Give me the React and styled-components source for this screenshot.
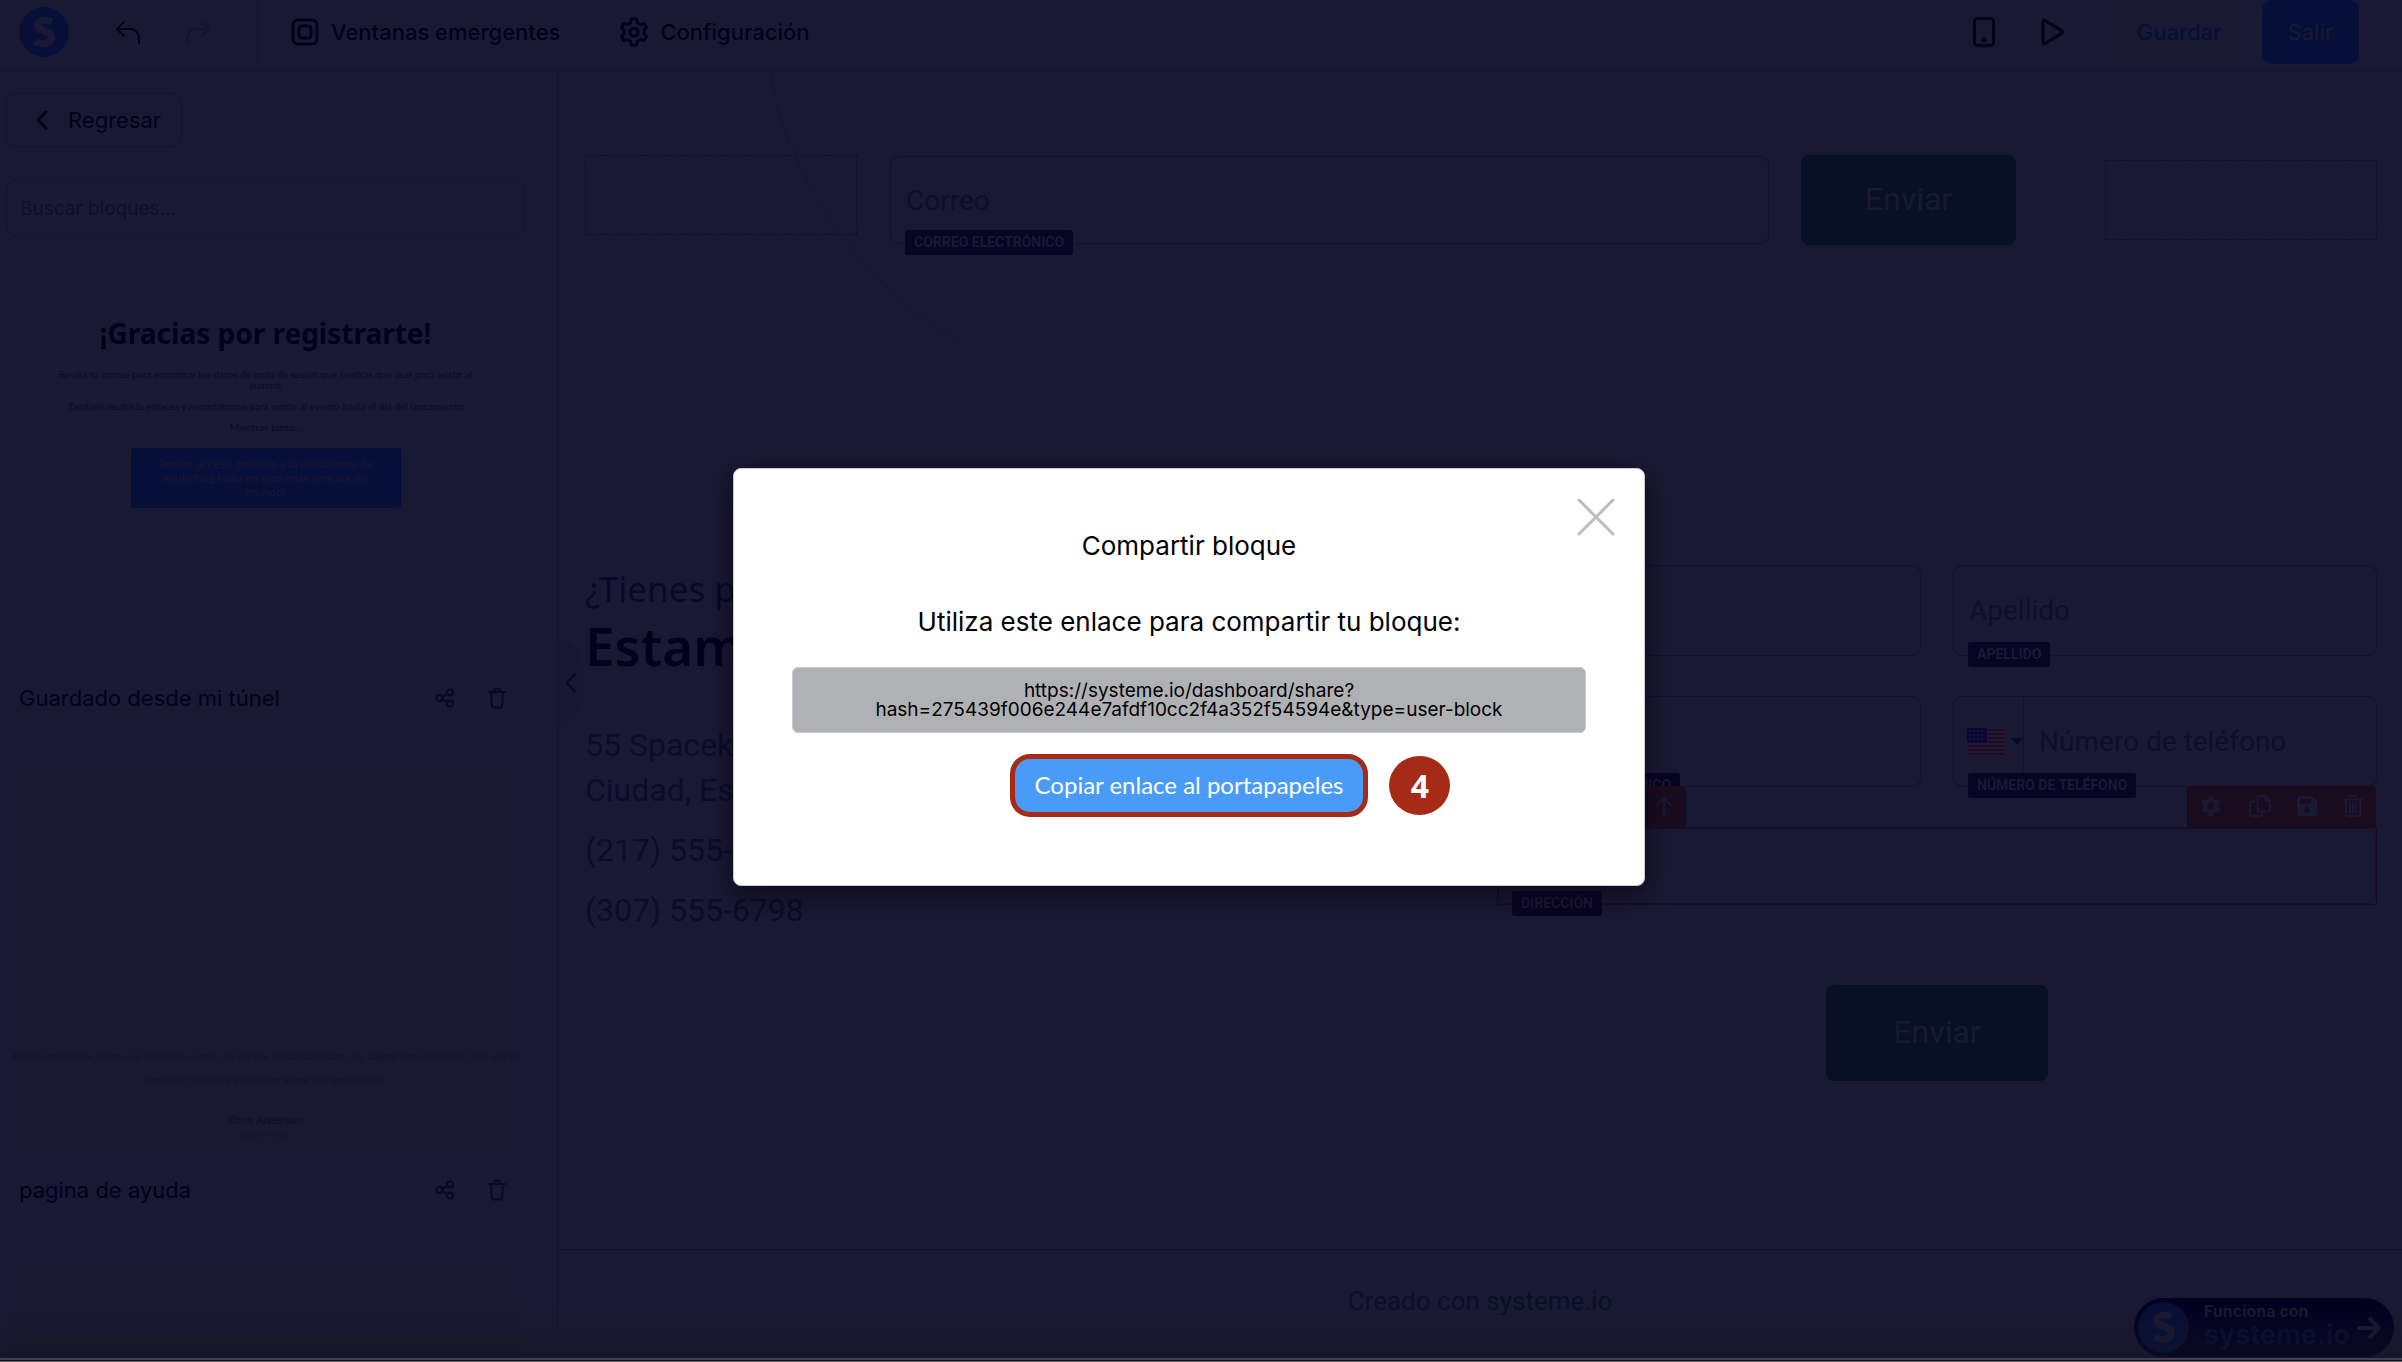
import React, { useState } from "react";
import styled, { createGlobalStyle } from "styled-components";

const colors = {
  bg: "#1a1933",
  canvas: "#191832",
  line: "#151430",
  ink: "#02001f",
  inkSoft: "#0a0828",
  navy: "#020020",
  blue: "#060f38",
  green: "#081024",
  muted: "#0f0d2a",
  tag: "#080424",
  red: "#190c1f",
  accent: "#a62b17",
};

const shareHash = "275439f006e244e7afdf10cc2f4a352f54594e";

const App = () => {
  const [search, setSearch] = useState("");
  return (
    <Frame>
      <GlobalStyle />
      <TopBar />
      <Body>
        <Sidebar>
          <BackButton type="button">
            <svg width="12" height="20" viewBox="0 0 12 20">
              <path d="M10 2 2 10l8 8" />
            </svg>
            Regresar
          </BackButton>
          <SearchInput
            aria-label="Buscar bloques"
            placeholder="Buscar bloques..."
            value={search}
            onChange={(e) => setSearch(e.target.value)}
          />
          <BlockList>
            <BlockCard name="Guardado desde mi túnel">
              <ThanksPreview />
            </BlockCard>
            <BlockCard name="pagina de ayuda" shaded>
              <QuotePreview />
            </BlockCard>
            <Preview $shaded />
          </BlockList>
        </Sidebar>
        <Canvas />
      </Body>
      <BottomShade />
      <WindowEdge />
      <ShareModal />
    </Frame>
  );
};

const TopBar = () => (
  <Header>
    <LogoLink href="#" aria-label="systeme">
      <LogoMark size={50} />
    </LogoLink>
    <History>
      <IconButton type="button" aria-label="Deshacer">
        <svg width="26" height="24" viewBox="0 0 26 24">
          <path d="M9 2 2 9l7 7M2 9h13a9 9 0 0 1 9 9v5" />
        </svg>
      </IconButton>
      <IconButton type="button" aria-label="Rehacer" $faint>
        <svg width="26" height="24" viewBox="0 0 26 24">
          <path d="m17 2 7 7-7 7M24 9H11a9 9 0 0 0-9 9v5" />
        </svg>
      </IconButton>
    </History>
    <NavButton type="button">
      <svg width="28" height="28" viewBox="0 0 28 28">
        <rect x="2" y="2" width="24" height="24" rx="5" />
        <rect x="8" y="8" width="12" height="12" rx="3" />
      </svg>
      Ventanas emergentes
    </NavButton>
    <NavButton type="button">
      <svg width="28" height="30" viewBox="0 0 28 30">
        <path d="M11.500 2h5l1.200 4 2.600 1.500 4-1 2.200 4.300-2.700 2.700v3l2.700 2.700-2.200 4.300-4-1-2.600 1.500-1.200 4h-5l-1.200-4-2.600-1.500-4 1-2.200-4.300 2.700-2.700v-3l-2.700-2.700 2.200-4.300 4 1L10.300 6z" />
        <circle cx="14" cy="15" r="4" />
      </svg>
      Configuración
    </NavButton>
    <Actions>
      <IconButton type="button" aria-label="Vista móvil">
        <svg width="22" height="30" viewBox="0 0 22 30">
          <rect x="1.500" y="1.500" width="19" height="27" rx="3" />
          <circle cx="11" cy="22.500" r="1" />
        </svg>
      </IconButton>
      <IconButton type="button" aria-label="Vista previa">
        <svg width="24" height="28" viewBox="0 0 24 28">
          <path d="M2 3.200v21.600c0 1.300 1 1.500 1.800.900l17.400-10.600c.9-.6.9-1.600 0-2.200L3.800 2.300C3 1.700 2 1.900 2 3.200z" />
        </svg>
      </IconButton>
      <SaveGroup>
        <TopButton type="button">Guardar</TopButton>
        <TopButton type="button" $primary>
          Salir
        </TopButton>
      </SaveGroup>
    </Actions>
  </Header>
);

const LogoMark = ({ size }) => (
  <svg width={size} height={size} viewBox="0 0 50 50" aria-hidden="true">
    <circle cx="25" cy="25" r="25" fill={colors.blue} />
    <path
      d="M33 14.500c-2.500-1.200-5-1.600-7.500-1.600-4 0-7 1.800-7 5.300 0 6.800 14 4.600 14 12.300 0 4.200-3.800 6-8 6-3.500 0-6-.6-8.500-1.900"
      fill="none"
      style={{ strokeWidth: 7, strokeLinecap: "butt" }}
      stroke={colors.bg}
    />
  </svg>
);

const BlockCard = ({ name, shaded, children }) => (
  <Card>
    <Preview $shaded={shaded}>{children}</Preview>
    <CardFooter>
      <CardName>{name}</CardName>
      <CardButton type="button" aria-label={`Compartir ${name}`}>
        <svg width="20" height="20" viewBox="0 0 20 20">
          <circle cx="4.500" cy="10" r="3" />
          <circle cx="15" cy="4.500" r="3" />
          <circle cx="15" cy="15.500" r="3" />
          <path d="m7.200 8.600 5.200-2.700M7.200 11.400l5.200 2.700" />
        </svg>
      </CardButton>
      <CardButton type="button" aria-label={`Eliminar ${name}`}>
        <svg width="20" height="22" viewBox="0 0 20 22">
          <path d="M2 5h16M4 5l.8 13.500c.1 1.300.8 2 2 2h6.400c1.200 0 1.900-.7 2-2L16 5M6.500 5c0-2.500 1-3.500 3.500-3.500s3.500 1 3.500 3.500" />
        </svg>
      </CardButton>
    </CardFooter>
  </Card>
);

const ThanksPreview = () => (
  <Thanks>
    <h2>¡Gracias por registrarte!</h2>
    <p>
      Revisa tu correo para encontrar los datos de incio de sesión que tendrás
      que usar para asistir al
      <br />
      summit
    </p>
    <p>
      También recibirás enlaces y recordatorios para unirte al evento hasta el
      día del lanzamiento
    </p>
    <p>Mientras tanto...</p>
    <ThanksButton>
      Recibe acceso gratuito a la plataforma de marketing todo en uno ¡más
      sencilla del mundo!
    </ThanksButton>
  </Thanks>
);

const QuotePreview = () => (
  <Quote>
    <p>
      Aenean sollicitudin, lorem quis bibendum auctor, nisi elit ade consequat
      ipsum, nec sagittis sem nibh id elit. Duis sed sit
      <br />
      amet nibh vulputate a sit nullam labore sed amet mauris.
    </p>
    <strong>Chris Anderson</strong>
    <small>CEO de Incorp</small>
  </Quote>
);

const Field = ({ label, placeholder, children }) => (
  <FieldBox>
    {children}
    <FieldInput aria-label={label} placeholder={placeholder} />
    <Tag>{label}</Tag>
  </FieldBox>
);

const Canvas = () => (
  <Main>
    <Collapse type="button" aria-label="Ocultar panel">
      <svg width="12" height="20" viewBox="0 0 12 20">
        <path d="M10 1 2 10l8 9" />
      </svg>
    </Collapse>
    <Hero>
      <Curve width="190" height="272" viewBox="0 0 190 272">
        <path d="M1 0C18 106 90 210 189 271" />
      </Curve>
      <DropZone />
      <HeroField>
        <Field label="Correo electrónico" placeholder="Correo" />
      </HeroField>
      <SubmitButton type="button">Enviar</SubmitButton>
      <DropZone $last />
    </Hero>
    <Contact>
      <div>
        <Question>¿Tienes preguntas?</Question>
        <Title>Estamos aquí</Title>
        <Address>
          <p>
            55 Spacek Street
            <br />
            Ciudad, Estado
          </p>
          <p>(217) 555-0113</p>
          <p>(307) 555-6798</p>
        </Address>
      </div>
      <Form onSubmit={(e) => e.preventDefault()}>
        <Field label="Nombre" placeholder="Nombre" />
        <Field label="Apellido" placeholder="Apellido" />
        <Field label="Correo electrónico" placeholder="Correo" />
        <Field label="Número de teléfono" placeholder="Número de teléfono">
          <CountryButton type="button" aria-label="País">
            <Flag />
            <svg width="12" height="7" viewBox="0 0 12 7">
              <path d="M0 0h12L6 7z" fill={colors.inkSoft} />
            </svg>
          </CountryButton>
        </Field>
        <Selected>
          <MoveTools>
            <ToolButton type="button" aria-label="Subir">
              <svg width="18" height="20" viewBox="0 0 18 20">
                <path d="M9 19V2M2 9l7-7 7 7" />
              </svg>
            </ToolButton>
          </MoveTools>
          <EditTools />
          <FieldInput aria-label="Dirección" $outlined />
          <Tag>Dirección</Tag>
        </Selected>
        <FormSubmit type="submit">Enviar</FormSubmit>
      </Form>
    </Contact>
    <Footer>
      <span>
        Creado con <a href="#">systeme.io</a>
      </span>
      <PoweredBy href="#">
        <LogoMark size={51} />
        <span>
          <small>Funciona con</small>
          <b>systeme.io</b>
        </span>
        <svg width="24" height="22" viewBox="0 0 24 22">
          <path d="M2 11h20M13 2l9 9-9 9" />
        </svg>
      </PoweredBy>
    </Footer>
  </Main>
);

const EditTools = () => (
  <EditBar>
    <ToolButton type="button" aria-label="Ajustes">
      <svg width="22" height="22" viewBox="0 0 22 22">
        <path
          d="M9 1h4l.7 3 1.800 1 2.900-.9 2 3.400L18.200 10v2l2.200 2.500-2 3.400-2.900-.9-1.800 1L13 21H9l-.7-3-1.800-1-2.900.9-2-3.400L3.800 12v-2L1.600 7.500l2-3.400 2.900.9 1.800-1zM11 7.500a3.500 3.500 0 1 0 0 7 3.500 3.500 0 0 0 0-7z"
          fill={colors.bg}
          fillRule="evenodd"
        />
      </svg>
    </ToolButton>
    <ToolButton type="button" aria-label="Duplicar">
      <svg width="24" height="24" viewBox="0 0 24 24">
        <path d="M9.500 4a2 2 0 0 1 2-2H18l4 4v9.500a2 2 0 0 1-2 2h-8.500a2 2 0 0 1-2-2zM17.500 2v4.500H22M6.500 7.500H4a2 2 0 0 0-2 2V20a2 2 0 0 0 2 2h8a2 2 0 0 0 2-2v-1" />
      </svg>
    </ToolButton>
    <ToolButton type="button" aria-label="Guardar bloque">
      <svg width="20" height="20" viewBox="0 0 20 20">
        <path
          d="M3 0h12l5 5v12a3 3 0 0 1-3 3H3a3 3 0 0 1-3-3V3a3 3 0 0 1 3-3zm0 3v5h11V3zm7 8a3 3 0 1 0 0 6 3 3 0 0 0 0-6z"
          fill={colors.bg}
          fillRule="evenodd"
        />
      </svg>
    </ToolButton>
    <ToolButton type="button" aria-label="Eliminar">
      <svg width="20" height="22" viewBox="0 0 20 22">
        <path d="M1 4.500h18M3 4.500V19a2 2 0 0 0 2 2h10a2 2 0 0 0 2-2V4.500M6 4V2.500C6 1.500 6.500 1 7.500 1h5c1 0 1.500.5 1.500 1.500V4M7 8v9.500M10 8v9.500M13 8v9.500" />
      </svg>
    </ToolButton>
  </EditBar>
);

const Flag = () => (
  <svg width="39" height="28" viewBox="0 0 39 28">
    <rect width="39" height="28" rx="3" fill="#1c1b35" />
    {[0, 1, 2, 3, 4, 5, 6].map((i) => (
      <rect key={i} x="1" y={i * 4 + 1} width="37" height="2" fill="#230a22" />
    ))}
    <rect width="20" height="15" rx="2" fill="#0a0732" />
    {[3, 7, 11].map((y) =>
      [3, 7, 11, 15].map((x) => (
        <circle key={`${x}-${y}`} cx={x} cy={y} r="1" fill="#1a1838" />
      ))
    )}
  </svg>
);

const ShareModal = () => {
  const url = `https://systeme.io/dashboard/share?hash=${shareHash}&type=user-block`;
  return (
    <Backdrop>
      <Dialog role="dialog" aria-modal="true" aria-labelledby="share-title">
        <CloseButton type="button" aria-label="Cerrar">
          <svg width="38" height="38" viewBox="0 0 38 38">
            <path d="m2 2 34 34M36 2 2 36" />
          </svg>
        </CloseButton>
        <DialogTitle id="share-title">Compartir bloque</DialogTitle>
        <DialogText>Utiliza este enlace para compartir tu bloque:</DialogText>
        <LinkBox>{url}</LinkBox>
        <CopyRow>
          <CopyButton
            type="button"
            onClick={() => navigator.clipboard.writeText(url)}
          >
            Copiar enlace al portapapeles
          </CopyButton>
          <Step>4</Step>
        </CopyRow>
      </Dialog>
    </Backdrop>
  );
};

const GlobalStyle = createGlobalStyle`
  * {
    box-sizing: border-box;
  }
  body {
    margin: 0;
    background: ${colors.bg};
    font-family: Inter, sans-serif;
    color: ${colors.ink};
  }
  h1, h2, h3, p {
    margin: 0;
    font-weight: 400;
  }
  button, input {
    margin: 0;
    padding: 0;
    border: 0;
    background: none;
    font: inherit;
    color: inherit;
  }
  a {
    color: inherit;
    text-decoration: none;
  }
  svg {
    display: block;
    flex: none;
    fill: none;
    stroke: currentColor;
    stroke-width: 3;
    stroke-linecap: round;
    stroke-linejoin: round;
  }
  svg [fill]:not([stroke]) {
    stroke: none;
  }
`;

const Frame = styled.div`
  position: relative;
  display: flex;
  flex-direction: column;
  height: 100vh;
  overflow: hidden;
  background: ${colors.bg};
`;

const Header = styled.header`
  display: flex;
  align-items: center;
  flex: none;
  height: 71px;
  padding: 0 43px 7px 19px;
  border-bottom: 1px solid ${colors.line};
`;

const LogoLink = styled.a`
  display: block;
`;

const History = styled.div`
  display: flex;
  align-items: center;
  gap: 44px;
  height: 64px;
  margin-right: 33px;
  padding: 0 46px;
  border-right: 1px solid ${colors.line};
  svg {
    stroke-width: 2;
  }
`;

const IconButton = styled.button`
  color: ${({ $faint }) => ($faint ? "#141330" : colors.ink)};
`;

const NavButton = styled.button`
  display: flex;
  align-items: center;
  gap: 12px;
  margin-right: 60px;
  font-size: 22px;
  font-weight: 500;
`;

const Actions = styled.div`
  display: flex;
  align-items: center;
  gap: 46px;
  margin-left: auto;
`;

const SaveGroup = styled.div`
  display: flex;
  gap: 14px;
`;

const TopButton = styled.button`
  height: 64px;
  padding: 0 26px;
  border-radius: 10px;
  font-size: 22px;
  font-weight: ${({ $primary }) => ($primary ? 400 : 500)};
  color: ${({ $primary }) => ($primary ? colors.bg : colors.blue)};
  background: ${({ $primary }) => ($primary ? colors.blue : "#191831")};
`;

const Body = styled.div`
  display: flex;
  flex: 1;
  min-height: 0;
`;

const Sidebar = styled.aside`
  flex: none;
  width: 558px;
  padding: 22px 32px 0 6px;
  overflow: hidden;
  border-right: 1px solid ${colors.line};
`;

const BackButton = styled.button`
  display: flex;
  align-items: center;
  gap: 20px;
  height: 54px;
  padding: 0 20px 0 29px;
  border: 1px solid ${colors.line};
  border-radius: 10px;
  font-size: 22px;
`;

const SearchInput = styled.input`
  display: block;
  width: 100%;
  height: 58px;
  margin: 32px 0 42px;
  padding: 0 13px;
  border: 1px solid #131230;
  border-radius: 10px;
  font-size: 19px;
  &::placeholder {
    color: ${colors.muted};
    opacity: 1;
  }
`;

const BlockList = styled.div`
  padding: 0 3px;
`;

const Card = styled.article`
  margin-bottom: 34px;
`;

const Preview = styled.div`
  height: 380px;
  border-radius: 8px;
  background: ${({ $shaded }) => ($shaded ? "#191831" : "none")};
`;

const CardFooter = styled.div`
  display: flex;
  align-items: center;
  height: 78px;
  padding: 0 15px 0 10px;
  gap: 32px;
`;

const CardName = styled.h3`
  flex: 1;
  font-size: 22px;
`;

const CardButton = styled.button`
  color: ${colors.inkSoft};
  svg {
    stroke-width: 2;
  }
`;

const Thanks = styled.div`
  display: flex;
  flex-direction: column;
  align-items: center;
  padding: 34px 12px 0;
  text-align: center;
  color: ${colors.inkSoft};
  h2 {
    margin-bottom: 16px;
    font: 700 28px/40px "Noto Sans", sans-serif;
    color: ${colors.ink};
  }
  p {
    margin-bottom: 10px;
    font: 10px/11px Lato, sans-serif;
  }
`;

const ThanksButton = styled.div`
  display: flex;
  align-items: center;
  width: 270px;
  height: 60px;
  margin-top: 5px;
  padding: 0 20px;
  border-radius: 3px;
  background: ${colors.blue};
  color: #181634;
  font: 12px/14px Lato, sans-serif;
`;

const Quote = styled.div`
  display: flex;
  flex-direction: column;
  justify-content: flex-end;
  height: 100%;
  padding-bottom: 9px;
  text-align: center;
  color: #121129;
  p {
    margin-bottom: 23px;
    font: 9px/23px Inter, sans-serif;
  }
  strong {
    font: 11px/14px Roboto, sans-serif;
    color: ${colors.green};
  }
  small {
    font: 8px/14px Roboto, sans-serif;
  }
`;

const Main = styled.main`
  position: relative;
  display: flex;
  flex-direction: column;
  flex: 1;
  min-width: 0;
  font-family: Roboto, sans-serif;
`;

const Collapse = styled.button`
  position: absolute;
  top: 567px;
  left: 0;
  display: flex;
  align-items: center;
  width: 27px;
  height: 90px;
  padding-left: 7px;
  border-radius: 0 27px 27px 0 / 0 45px 45px 0;
  background: #181731;
  color: ${colors.inkSoft};
  svg {
    stroke-width: 2;
  }
`;

const Hero = styled.section`
  position: relative;
  display: flex;
  align-items: flex-start;
  flex: none;
  height: 330px;
  padding: 84px 25px 0 27px;
  background: ${colors.canvas};
`;

const Curve = styled.svg`
  position: absolute;
  top: 0;
  left: 211px;
  color: #151428;
  stroke-width: 1;
`;

const DropZone = styled.div`
  flex: none;
  width: 272px;
  height: 80px;
  margin-top: ${({ $last }) => ($last ? "5px" : 0)};
  margin-left: ${({ $last }) => ($last ? "89px" : 0)};
  border: 1px dashed #0f0e29;
`;

const HeroField = styled.div`
  flex: 1;
  height: 88px;
  margin: 1px 32px 0 33px;
`;

const FieldBox = styled.div`
  position: relative;
  display: flex;
  height: 100%;
  min-height: 88px;
  border: 1px solid #11102e;
  border-radius: 9px;
`;

const FieldInput = styled.input`
  flex: 1;
  width: 100%;
  min-width: 0;
  padding: 0 15px;
  border: ${({ $outlined }) => ($outlined ? "1px solid #11102e" : 0)};
  border-radius: 9px;
  font-size: 28px;
  &::placeholder {
    color: ${colors.muted};
    opacity: 1;
  }
`;

const Tag = styled.span`
  position: absolute;
  bottom: -12px;
  left: 14px;
  height: 25px;
  padding: 0 9px;
  border-radius: 3px;
  background: ${colors.tag};
  color: ${colors.bg};
  font-size: 14px;
  font-weight: 700;
  line-height: 25px;
  text-transform: uppercase;
`;

const SubmitButton = styled.button`
  flex: none;
  width: 215px;
  height: 90px;
  padding-bottom: 2px;
  border-radius: 8px;
  background: ${colors.green};
  color: ${colors.bg};
  font-size: 32px;
`;

const Contact = styled.section`
  display: grid;
  grid-template-columns: 1fr 1fr;
  gap: 32px;
  flex: 1;
  padding: 164px 25px 0 27px;
`;

const Question = styled.p`
  font: 35px/48px "Noto Sans", sans-serif;
  color: ${colors.inkSoft};
`;

const Title = styled.h1`
  margin-bottom: 44px;
  font: 600 53px/66px "Noto Sans", sans-serif;
`;

const Address = styled.address`
  display: flex;
  flex-direction: column;
  gap: 15px;
  font-size: 32px;
  font-style: normal;
  line-height: 45px;
  color: #0d0b29;
`;

const Form = styled.form`
  display: grid;
  grid-template-columns: 1fr 1fr;
  grid-template-rows: 91px 91px 78px 96px;
  gap: 40px 32px;
`;

const CountryButton = styled.button`
  display: flex;
  align-items: center;
  gap: 5px;
  padding-left: 13px;
  border-right: 1px solid #121130;
`;

const Selected = styled.div`
  position: relative;
  grid-column: 1 / -1;
  display: flex;
  border: 1px solid ${colors.red};
`;

const MoveTools = styled.div`
  position: absolute;
  bottom: 100%;
  left: -1px;
  display: flex;
  align-items: center;
  justify-content: flex-end;
  width: 189px;
  height: 42px;
  padding: 0 13px 2px;
  border-radius: 4px 4px 0 0;
  background: ${colors.red};
`;

const EditBar = styled(MoveTools)`
  right: 0;
  left: auto;
  justify-content: space-between;
`;

const ToolButton = styled.button`
  color: ${colors.bg};
  svg {
    stroke-width: 2;
  }
`;

const FormSubmit = styled(SubmitButton)`
  grid-column: 1 / -1;
  justify-self: center;
  width: 222px;
  height: 96px;
  margin-top: 40px;
`;

const Footer = styled.footer`
  position: relative;
  display: flex;
  align-items: center;
  justify-content: center;
  flex: none;
  height: 109px;
  padding-bottom: 7px;
  border-top: 1px solid #121130;
  font-size: 26px;
  color: #0e0c2a;
  a {
    color: ${colors.green};
  }
`;

const PoweredBy = styled.a`
  position: absolute;
  right: 8px;
  bottom: 1px;
  display: flex;
  align-items: center;
  width: 260px;
  height: 59px;
  padding: 0 13px 0 4px;
  border-radius: 30px;
  background: ${colors.navy};
  span {
    flex: 1;
    padding: 0 0 5px 15px;
  }
  small {
    display: block;
    font: 700 16px/20px Inter, sans-serif;
    color: #1a1932;
  }
  b {
    display: block;
    font: 700 27px/28px Inter, sans-serif;
    color: #060d33;
  }
  > svg:last-child {
    color: #1a1932;
    stroke-width: 4;
  }
`;

const BottomShade = styled.div`
  position: absolute;
  right: 0;
  bottom: 4px;
  left: 0;
  height: 56px;
  background: linear-gradient(transparent, rgba(20, 20, 34, 0.5));
`;

const WindowEdge = styled.div`
  flex: none;
  height: 4px;
  border-top: 2px solid #443f57;
  border-bottom: 1px solid #6f6d75;
  background: #0b0a12;
`;

const Backdrop = styled.div`
  position: absolute;
  inset: 0;
  display: flex;
  align-items: center;
  justify-content: center;
  padding: 0 24px 8px 0;
`;

const Dialog = styled.section`
  position: relative;
  display: flex;
  flex-direction: column;
  align-items: center;
  width: 912px;
  padding: 59px 58px 68px;
  border: 1px solid #c9c9d1;
  border-radius: 8px;
  background: #fff;
  box-shadow: 0 8px 28px rgba(10, 6, 20, 0.8);
  color: #000;
`;

const CloseButton = styled.button`
  position: absolute;
  top: 29px;
  right: 29px;
  color: #bdbdbd;
`;

const DialogTitle = styled.h2`
  font-size: 26px;
  line-height: 36px;
`;

const DialogText = styled.p`
  margin: 40px 0 27px;
  font-size: 26px;
  line-height: 36px;
`;

const LinkBox = styled.div`
  align-self: stretch;
  padding: 13px 60px;
  border: 1px solid #c9cacd;
  border-radius: 6px;
  background: #b0b1b5;
  font-size: 19px;
  line-height: 19px;
  text-align: center;
  overflow-wrap: anywhere;
`;

const CopyRow = styled.div`
  position: relative;
  display: flex;
  align-items: center;
  margin-top: 21px;
`;

const CopyButton = styled.button`
  height: 63px;
  padding: 0 20px 2px;
  border: 5px solid ${colors.accent};
  border-radius: 20px;
  background: #499bf7;
  color: #fff;
  font-family: Lato, sans-serif;
  font-size: 24px;
`;

const Step = styled.span`
  position: absolute;
  left: calc(100% + 21px);
  display: flex;
  align-items: center;
  justify-content: center;
  width: 61px;
  height: 59px;
  border-radius: 50%;
  background: ${colors.accent};
  color: #fff;
  font: 700 32px/40px "Noto Sans", sans-serif;
`;

export default App;
